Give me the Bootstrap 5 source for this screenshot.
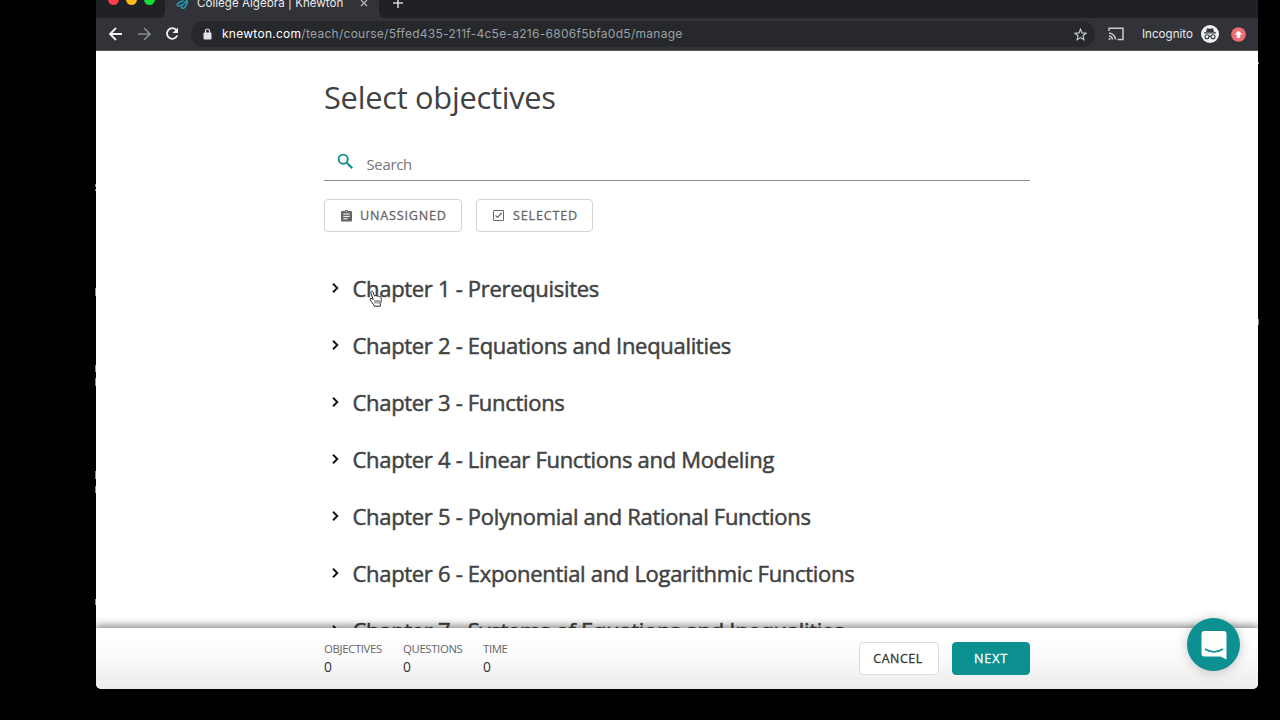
<!DOCTYPE html>
<html lang="en">
<head>
<meta charset="utf-8">
<meta name="viewport" content="width=device-width, initial-scale=1">
<title>College Algebra | Knewton</title>
<link href="https://cdn.jsdelivr.net/npm/bootstrap@5.3.0/dist/css/bootstrap.min.css" rel="stylesheet">
<style>
  body { background:#000; height:720px; font-family:"Open Sans","Noto Sans",sans-serif; color:#424242; }
  svg { display:block; flex:none; }
  .window { width:1162px; height:689px; margin-left:96px; background:#fff; border-radius:0 0 5px 5px; }
  .chrome { font-family:Inter,"Liberation Sans",sans-serif; }
  .tabs { height:18px; background:#202124; }
  .strip { background:#313338; }
  .lights { width:69px; height:18px; background:#202124; border-radius:0 0 6px 0; padding-left:12px; gap:7px; }
  .light { width:11px; height:11px; border-radius:50%; margin-top:-6px; }
  .tab { width:214px; height:18px; background:#313338; color:#e8eaed; font-size:11.6px; }
  .tab-title { margin-left:7px; line-height:14px; margin-top:-4px; white-space:nowrap; letter-spacing:.01px; }
  .newtab { height:18px; background:#202124; border-radius:0 0 0 6px; }
  .toolbar { height:33px; background:#313338; border-bottom:1px solid #55575a; padding-left:12px; }
  .address { width:904px; height:26px; border-radius:13px; background:#26282c; margin-left:11px; padding:0 8px 0 12px; font-size:12px; color:#9aa0a6; }
  .url { margin-left:10px; white-space:nowrap; letter-spacing:.27px; }
  .url b { font-weight:400; color:#fff; }
  .incog { color:#e8eaed; font-size:11.6px; margin:1px 0 0 17px; width:59px; white-space:nowrap; }
  .page { height:577px; }
  .column { width:706px; margin-left:228px; }
  .title { font-size:30.8px; line-height:42px; font-weight:400; padding-top:25px; letter-spacing:-.27px; white-space:nowrap; }
  .search { height:38px; margin-top:25px; width:706px; border-bottom:1px solid #8e8e8e; padding:0 0 0 13px; }
  .search span { font-size:14.8px; line-height:20px; color:#757575; letter-spacing:-.25px; margin:11px 0 0 12.5px; }
  .btn.flat { height:33px; border:1px solid #d4d4d4; border-radius:4px; padding:2px 0 0; font-size:12.6px; font-weight:400; letter-spacing:.8px; color:#666; background:#fff; white-space:nowrap; -webkit-text-stroke:.3px currentColor; }
  .btn.flat svg { margin-top:-2px; }
  .chapters { margin-top:27px; }
  .chapter { height:57px; padding-left:8px; font-size:22px; line-height:30px; letter-spacing:-.31px; white-space:nowrap; color:#424242; -webkit-text-stroke:.5px #424242; }
  .chapter svg { margin-right:13.5px; margin-top:1px; }
  .actions { height:61px; background:linear-gradient(#fff 10%,#fafafa 50%,#ebebeb); box-shadow:0 -1px 8px 1px rgba(0,0,0,.5); clip-path:inset(-14px 0 0 0); padding-left:228px; border-radius:0 0 5px 5px; }
  .stat { font-size:11.4px; line-height:12px; letter-spacing:-.38px; color:#666; white-space:nowrap; padding-top:15px; }
  .stat div { font-size:13.8px; line-height:18px; color:#333; margin-top:3px; }
  .btn.flat.cancel { width:80px; height:33px; color:#333; border-color:#ddd; margin-left:350px; letter-spacing:.55px; font-size:12.4px; padding-right:2px; }
  .btn.flat.next { width:78px; height:33px; background:#0c8f8f; border-color:#0c8f8f; color:#fff; }
  .chat { left:1187px; top:618px; width:53px; height:53px; background:#0d9092; box-shadow:0 1px 12px rgba(0,0,0,.22); }
  .pointer { left:368px; top:289px; }
  .speck { width:1px; background:#8a8a8a; }
</style>
</head>
<body class="overflow-hidden position-relative">
<div class="window overflow-hidden">
  <header class="chrome">
    <div class="tabs d-flex overflow-hidden">
      <div class="strip"><div class="lights d-flex">
        <div class="light" style="background:#fa3e4c"></div><div class="light" style="background:#fcba10"></div><div class="light" style="background:#18dc36"></div>
      </div></div>
      <div class="tab d-flex">
        <svg width="14" height="10" viewBox="0 0 14 10" style="margin-left:11px" fill="none" stroke="#25a0b8" stroke-width="1.5" stroke-linecap="round"><path d="M7 1C4 2 1 3 1.200 5c.3 1.800 4 1 7-1.500L12-1M5.500 6.500c0 2 1.700 2.300 3 1.200 1.500-1.300 1.700-3.500 3.200-5.700"/></svg>
        <div class="tab-title">College Algebra | Knewton</div>
        <svg class="ms-auto" width="10" height="10" viewBox="0 0 10 10" style="margin-right:10px;margin-top:-2px" stroke="#b4b6ba" stroke-width="1.3"><path d="M2 2l6 6M8 2L2 8"/></svg>
      </div>
      <div class="strip flex-grow-1"><div class="newtab overflow-hidden">
        <svg width="12" height="12" viewBox="0 0 12 12" style="margin-left:13px;margin-top:-3px" stroke="#d0d2d5" stroke-width="1.600"><path d="M6 1v10M1 6h10"/></svg>
      </div></div>
    </div>
    <div class="toolbar d-flex align-items-center">
      <svg width="15" height="16" viewBox="0 0 15 16" fill="none" stroke="#f1f3f4" stroke-width="1.8"><path d="M14 8H2M8 2L2 8l6 6"/></svg>
      <svg width="15" height="16" viewBox="0 0 15 16" fill="none" stroke="#888b90" stroke-width="1.6" style="margin-left:14px"><path d="M1 8h12M7 2l6 6-6 6"/></svg>
      <svg width="16" height="16" viewBox="0 0 16 16" fill="none" stroke="#f1f3f4" stroke-width="1.8" style="margin-left:12px"><path d="M12.300 4A5.300 5.300 0 1 0 13.200 9.500"/><path d="M14 1.500V7H8.500z" fill="#f1f3f4" stroke="none"/></svg>
      <div class="address d-flex align-items-center">
        <svg width="9" height="12" viewBox="0 0 9 12"><rect x=".5" y="4.500" width="8" height="7" rx="1" fill="#e2e4e7"/><path d="M2.500 5V3a2 2 0 0 1 4 0v2" fill="none" stroke="#e2e4e7" stroke-width="1.200"/></svg>
        <div class="url"><b>knewton.com</b>/teach/course/5ffed435-211f-4c5e-a216-6806f5bfa0d5/manage</div>
        <svg class="ms-auto" width="13" height="13" viewBox="0 0 13 13" fill="none" stroke="#c5c8cc" stroke-width="1.200"><path d="M6.500 1.200l1.500 3.700 4 .3-3 2.600.9 3.900-3.400-2.100-3.400 2.100.9-3.900-3-2.600 4-.3z"/></svg>
      </div>
      <svg width="16" height="14" viewBox="0 0 16 14" fill="none" stroke="#c8cacd" stroke-width="1.500" style="margin-left:13px;margin-right:1px"><path d="M1 4V1.200h14v11.300H9.500M1 6a7 7 0 0 1 6.500 6.500M1 9a4 4 0 0 1 3.500 3.500"/><circle cx="1.500" cy="12" r="1" fill="#c8cacd" stroke="none"/></svg>
      <div class="incog">Incognito</div>
      <svg width="18" height="18" viewBox="0 0 18 18"><circle cx="9" cy="9" r="9" fill="#eef0f2"/><path d="M6 3.200l3 .5 3-.5L13 7H5zM3 7.300h12v1.100H3z" fill="#35373c"/><g fill="none" stroke="#35373c" stroke-width="1.100"><circle cx="6" cy="11.800" r="2"/><circle cx="12" cy="11.800" r="2"/><path d="M8 11.500q1-.7 2 0"/></g></svg>
      <svg width="15" height="15" viewBox="0 0 15 15" style="margin-left:12px"><circle cx="7.500" cy="7.500" r="7.300" fill="#f06c72"/><path d="M7.500 3.500l3.800 4H9.200v3.500H5.800V7.500H3.700z" fill="#fff"/></svg>
    </div>
  </header>

  <main class="page overflow-hidden">
    <div class="column">
      <h1 class="title mb-0">Select objectives</h1>
      <div class="search d-flex">
        <svg width="17" height="17" viewBox="0 0 17 17" fill="none" stroke="#12908f" style="margin-top:10px"><circle cx="6.200" cy="6.200" r="4.600" stroke-width="1.900"/><path d="M9.800 9.800l5.500 5.500" stroke-width="2.200"/></svg>
        <span>Search</span>
      </div>
      <div class="d-flex" style="gap:14px;margin-top:18px">
        <button class="btn flat d-flex align-items-center" style="width:138px;padding-left:16px">
          <svg width="11" height="13" viewBox="0 0 11 13" style="margin-right:8px"><path d="M1 2h2.800a1.800 1.800 0 0 1 3.400 0H10q1 0 1 1v8.500q0 1-1 1H1q-1 0-1-1V3q0-1 1-1z" fill="#666"/><path d="M2.300 5h6.400M2.300 7.400h6.400M2.300 9.800h4.400" stroke="#fff"/><circle cx="5.500" cy="2.300" r=".6" fill="#fff"/></svg>UNASSIGNED</button>
        <button class="btn flat d-flex align-items-center" style="width:117px;padding-left:16px">
          <svg width="11" height="11" viewBox="0 0 11 11" fill="none" stroke="#666" style="margin-right:9px"><rect x=".5" y=".5" width="10" height="10" rx=".5"/><path d="M2.500 5.400l2 2.100 4.300-4.500" stroke-width="1.200"/></svg>SELECTED</button>
      </div>
      <div class="chapters">
        <div class="chapter d-flex align-items-center"><svg width="7" height="10" viewBox="0 0 7 10" fill="none" stroke="#111" stroke-width="1.900"><path d="M1 .8L5.300 5 1 9.200"/></svg>Chapter 1 - Prerequisites</div>
        <div class="chapter d-flex align-items-center"><svg width="7" height="10" viewBox="0 0 7 10" fill="none" stroke="#111" stroke-width="1.900"><path d="M1 .8L5.300 5 1 9.200"/></svg>Chapter 2 - Equations and Inequalities</div>
        <div class="chapter d-flex align-items-center"><svg width="7" height="10" viewBox="0 0 7 10" fill="none" stroke="#111" stroke-width="1.900"><path d="M1 .8L5.300 5 1 9.200"/></svg>Chapter 3 - Functions</div>
        <div class="chapter d-flex align-items-center"><svg width="7" height="10" viewBox="0 0 7 10" fill="none" stroke="#111" stroke-width="1.900"><path d="M1 .8L5.300 5 1 9.200"/></svg>Chapter 4 - Linear Functions and Modeling</div>
        <div class="chapter d-flex align-items-center"><svg width="7" height="10" viewBox="0 0 7 10" fill="none" stroke="#111" stroke-width="1.900"><path d="M1 .8L5.300 5 1 9.200"/></svg>Chapter 5 - Polynomial and Rational Functions</div>
        <div class="chapter d-flex align-items-center"><svg width="7" height="10" viewBox="0 0 7 10" fill="none" stroke="#111" stroke-width="1.900"><path d="M1 .8L5.300 5 1 9.200"/></svg>Chapter 6 - Exponential and Logarithmic Functions</div>
        <div class="chapter d-flex align-items-center"><svg width="7" height="10" viewBox="0 0 7 10" fill="none" stroke="#111" stroke-width="1.900"><path d="M1 .8L5.300 5 1 9.200"/></svg>Chapter 7 - Systems of Equations and Inequalities</div>
      </div>
    </div>
  </main>

  <footer class="actions d-flex position-relative">
    <div class="stat" style="width:79px">OBJECTIVES<div>0</div></div>
    <div class="stat" style="width:80px">QUESTIONS<div>0</div></div>
    <div class="stat" style="width:26px">TIME<div>0</div></div>
    <div class="d-flex" style="gap:13px;padding-top:14px">
      <button class="btn flat cancel">CANCEL</button>
      <button class="btn flat next">NEXT</button>
    </div>
  </footer>
</div>

<div class="chat position-absolute rounded-circle d-flex justify-content-center align-items-center">
  <svg width="26" height="30" viewBox="0 0 26 30"><path d="M3.500 1h19Q25.500 1 25.500 4v25.500l-6-3h-16Q.5 26.500.5 23.500V4q0-3 3-3z" fill="#fff"/><path d="M4.500 19.300q8.500 5.200 17 0" fill="none" stroke="#0d9092" stroke-width="1.700" stroke-linecap="round"/></svg>
</div>

<svg class="pointer position-absolute" width="16" height="19" viewBox="0 0 16 19"><path d="M5.200 10.500L3 4.200c-.7-2 1.300-2.700 2-1l1.600 4c.4-.9 1.900-.9 2.300.1.700-.8 2-.4 2.200.5.800-.6 1.900 0 2 .9.400 2.200.1 4.500-.8 5.700v2.800H6.200l-.5-1.500L2.200 11c-.9-1.400.7-2.100 1.600-1.300z" fill="#fff" stroke="#111" stroke-width=".9"/><path d="M7 11v3.500M9 11v3.500M11 11v3.500" stroke="#222" stroke-width=".8"/></svg>

<div class="speck position-absolute" style="left:95px;top:184px;height:3px"></div>
<div class="speck position-absolute" style="left:95px;top:189px;height:2px"></div>
<div class="speck position-absolute" style="left:95px;top:288px;height:8px"></div>
<div class="speck position-absolute" style="left:95px;top:365px;height:7px"></div>
<div class="speck position-absolute" style="left:95px;top:378px;height:8px"></div>
<div class="speck position-absolute" style="left:95px;top:471px;height:8px"></div>
<div class="speck position-absolute" style="left:95px;top:486px;height:7px"></div>
<div class="speck position-absolute" style="left:95px;top:599px;height:6px"></div>
<div class="speck position-absolute" style="left:1258px;top:62px;height:2px"></div>
<div class="speck position-absolute" style="left:1258px;top:319px;height:6px"></div>
<script src="https://cdn.jsdelivr.net/npm/bootstrap@5.3.0/dist/js/bootstrap.bundle.min.js"></script>
</body>
</html>
